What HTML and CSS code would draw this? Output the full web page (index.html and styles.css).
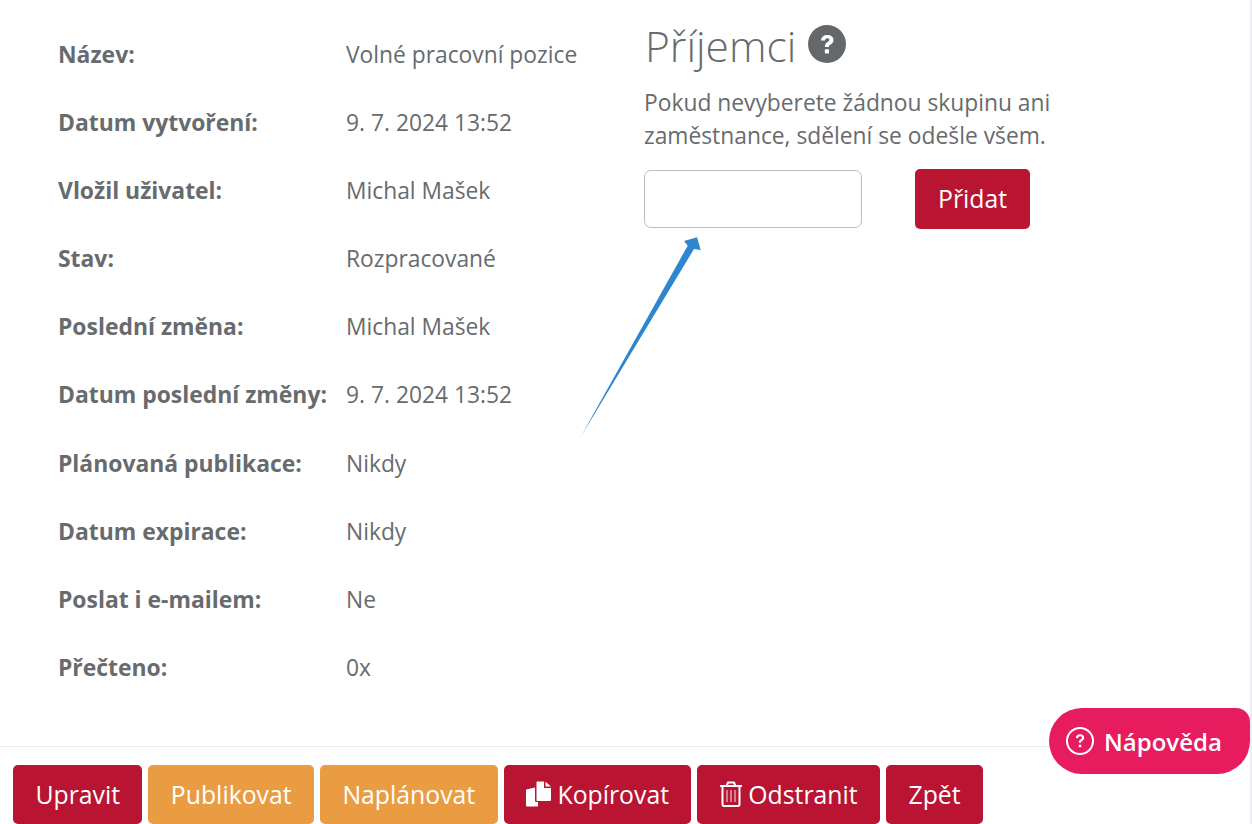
FILE: index.html
```html
<!DOCTYPE html>
<html lang="cs">
<head>
    <meta charset="UTF-8">
    <meta name="viewport" content="width=device-width, initial-scale=1.0">
    <title>Sdělení</title>
    <link rel="stylesheet" href="styles.css">
</head>
<body>
    <div class="page">
        <div class="content">
            <dl class="details">
                <dt>Název:</dt><dd>Volné pracovní pozice</dd>
                <dt>Datum vytvoření:</dt><dd>9. 7. 2024 13:52</dd>
                <dt>Vložil uživatel:</dt><dd>Michal Mašek</dd>
                <dt>Stav:</dt><dd>Rozpracované</dd>
                <dt>Poslední změna:</dt><dd>Michal Mašek</dd>
                <dt>Datum poslední změny:</dt><dd>9. 7. 2024 13:52</dd>
                <dt>Plánovaná publikace:</dt><dd>Nikdy</dd>
                <dt>Datum expirace:</dt><dd>Nikdy</dd>
                <dt>Poslat i e-mailem:</dt><dd>Ne</dd>
                <dt>Přečteno:</dt><dd>0x</dd>
            </dl>

            <div class="recipients">
                <h2>Příjemci
                    <svg class="help-icon" viewBox="0 0 38 38" aria-hidden="true">
                        <circle cx="19" cy="19" r="19" fill="#64686b"/>
                        <path d="M13 15.500c.3-3.600 2.800-5.500 6.300-5.500 3.600 0 6.200 2 6.200 5 0 2.300-1.300 3.500-2.900 4.500-1.300.8-1.700 1.300-1.700 2.600h-4c0-2.700.8-3.800 2.600-5 1.200-.8 1.900-1.300 1.900-2.300 0-1-.9-1.600-2.100-1.600-1.300 0-2.200.8-2.400 2.300z" fill="#fff"/>
                        <rect x="16.800" y="24.300" width="4.200" height="4.200" rx=".8" fill="#fff"/>
                    </svg>
                </h2>
                <p>Pokud nevyberete žádnou skupinu ani zaměstnance, sdělení se odešle všem.</p>
                <div class="add-row">
                    <input type="text" class="recipient-input">
                    <button class="btn btn-red btn-add">Přidat</button>
                </div>
            </div>

            <!-- annotation over the page -->
            <svg class="arrow" width="130" height="210" viewBox="0 0 130 210" aria-hidden="true">
                <defs>
                    <linearGradient id="arrowFade" x1="0" y1="1" x2="0.1" y2="0.92">
                        <stop offset="0" stop-color="#2e86cf" stop-opacity="0.6"/>
                        <stop offset="1" stop-color="#2e86cf"/>
                    </linearGradient>
                </defs>
                <polygon points="0,208 107.700,15.700 104,11 117,7.300 120.700,20 114,19" fill="url(#arrowFade)"/>
            </svg>
        </div>

        <div class="footer">
            <button class="btn btn-red">Upravit</button>
            <button class="btn btn-orange">Publikovat</button>
            <button class="btn btn-orange">Naplánovat</button>
            <button class="btn btn-red">
                <svg class="btn-icon" width="25" height="26" viewBox="0 0 25 26" aria-hidden="true">
                    <path d="M0 9.500c0-.6.300-1 1-1.200L9 6.500v13c0 1 .6 1.500 1.500 1.500H12v3.500c0 .6-.4 1-1 1H1c-.6 0-1-.4-1-1z" fill="#fff"/>
                    <path d="M10.500 1.500c0-.6.400-1 1-1H18v6.500h7v12c0 .6-.4 1-1 1H11.500c-.6 0-1-.4-1-1z" fill="#fff"/>
                    <path d="M19.500 .8 25 5.500h-5.500z" fill="#fff"/>
                </svg>
                Kopírovat
            </button>
            <button class="btn btn-red">
                <svg class="btn-icon" width="22" height="26" viewBox="0 0 22 26" fill="none" stroke="#fff" aria-hidden="true">
                    <path d="M0 5h22" stroke-width="2"/>
                    <path d="M6.500 5 8 1.500h6L15.500 5" stroke-width="2"/>
                    <path d="M2.500 5v18c0 1 .6 2 1.500 2h14c.9 0 1.500-1 1.500-2V5" stroke-width="2"/>
                    <path d="M7 9v12M11 9v12M15 9v12" stroke-width="1.200" opacity=".75"/>
                </svg>
                Odstranit
            </button>
            <button class="btn btn-red">Zpět</button>
        </div>

        <a class="help-button" href="#">
            <svg width="30" height="30" viewBox="0 0 30 30" aria-hidden="true">
                <circle cx="15" cy="15" r="13" fill="none" stroke="#fff" stroke-width="2"/>
                <path d="M10.800 12c.3-2.400 1.900-3.700 4.300-3.700 2.500 0 4.100 1.400 4.100 3.400 0 1.500-.8 2.300-1.900 3-1 .7-1.300 1.100-1.300 2.100h-2.200c0-1.800.6-2.600 1.800-3.400.9-.6 1.300-1 1.300-1.700 0-.8-.7-1.400-1.800-1.400-1.200 0-1.900.7-2.100 1.900z" fill="#fff"/>
                <rect x="13.800" y="18.800" width="2.400" height="2.400" fill="#fff"/>
            </svg>
            Nápověda
        </a>
    </div>
</body>
</html>
```

FILE: styles.css
```css
html, body {
    margin: 0;
    padding: 0;
    height: 100%;
    overflow: hidden;
    background-color: #fff;
}

body {
    font-family: "Open Sans", sans-serif;
    color: #676b6e;
}

.page {
    position: relative;
    width: 1250px;
    height: 824px;
    border-right: 2px solid #eceef3;
    overflow: hidden;
}

.content {
    position: relative;
    display: flex;
    height: 746px;
    box-sizing: border-box;
    padding-left: 58px;
}

/* Detail list */
.details {
    display: grid;
    grid-template-columns: 288px 298px;
    grid-auto-rows: 68.1px;
    margin: 21px 0 0;
    font-size: 22.8px;
    line-height: 68.1px;
}

.details dt {
    font-size: 22.9px;
    font-weight: 700;
    white-space: nowrap;
}

.details dd {
    margin: 0;
    white-space: nowrap;
}

/* Recipients */
.recipients {
    width: 430px;
}

.recipients h2 {
    display: flex;
    align-items: center;
    gap: 12px;
    margin: 16px 0 0 1px;
    font-size: 42.5px;
    font-weight: 300;
    line-height: 60px;
}

.help-icon {
    width: 38px;
    height: 38px;
    margin-top: -4px;
}

.recipients p {
    margin: 10px 0 0;
    font-size: 22.8px;
    line-height: 33px;
}

.add-row {
    display: flex;
    align-items: flex-start;
    gap: 53px;
    margin-top: 17px;
}

.recipient-input {
    width: 218px;
    height: 58px;
    margin-top: 1px;
    box-sizing: border-box;
    border: 1px solid #bdbdbd;
    border-radius: 7px;
    background-color: #fff;
}

.arrow {
    position: absolute;
    left: 580px;
    top: 230px;
}

/* Buttons */
.btn {
    display: inline-flex;
    align-items: center;
    height: 59px;
    padding: 0 22.4px 2px;
    border: none;
    border-radius: 5px;
    color: #fff;
    font-family: inherit;
    font-size: 24.8px;
    white-space: nowrap;
}

.btn-red {
    background-color: #b91432;
}

.btn-orange {
    background-color: #e99c41;
}

.btn-add {
    height: 60px;
    padding: 0 23px 2px;
}

.btn-icon {
    margin-right: 6.5px;
    flex-shrink: 0;
}

.footer {
    display: flex;
    gap: 6px;
    height: 78px;
    box-sizing: border-box;
    padding: 18px 0 0 13px;
    border-top: 1px solid #e9ecef;
}

.help-button {
    position: absolute;
    left: 1049px;
    top: 708px;
    display: flex;
    align-items: center;
    gap: 9px;
    width: 201px;
    height: 66px;
    box-sizing: border-box;
    padding-left: 16px;
    border-radius: 33px 14px 33px 33px;
    background-color: #e61c5f;
    color: #fff;
    font-size: 24px;
    font-weight: 600;
    text-decoration: none;
}
```
